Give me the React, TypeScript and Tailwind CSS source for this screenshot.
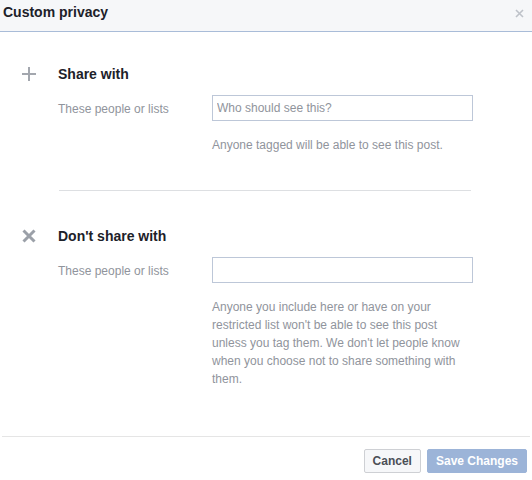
import { useState } from 'react'

function PlusIcon() {
  return (
    <svg width="14" height="14" viewBox="0 0 14 14" className="block">
      <path d="M7 0v14M0 7h14" stroke="#a3a7ae" strokeWidth="2" />
    </svg>
  )
}

function CrossIcon() {
  return (
    <svg width="14" height="14" viewBox="0 0 14 14" className="block">
      <path d="M1.5 1.5l11 11M12.5 1.5l-11 11" stroke="#9ba0a8" strokeWidth="3" />
    </svg>
  )
}

interface SectionProps {
  icon: React.ReactNode
  title: string
  placeholder?: string
  help: string
}

function Section({ icon, title, placeholder, help }: SectionProps) {
  const [value, setValue] = useState('')
  return (
    <div className="flex pl-[22px]">
      <div className="w-[36px] pt-[3px]">{icon}</div>
      <div className="flex-1">
        <div className="text-[14px] leading-[20px] font-bold text-[#1d2129]">{title}</div>
        <div className="mt-[11px] flex items-center">
          <div className="w-[154px] pt-[2px] text-[12px] text-[#90949c]">These people or lists</div>
          <input
            value={value}
            onChange={(e) => setValue(e.target.value)}
            placeholder={placeholder}
            className="w-[261px] h-[26px] border border-[#bdc7d8] px-[4px] text-[12px] text-[#1d2129] placeholder:text-[#90949c] outline-none"
          />
        </div>
        <p className="ml-[154px] w-[262px] mt-[15px] text-[12px] leading-[18px] text-[#90949c]">{help}</p>
      </div>
    </div>
  )
}

export default function App() {
  return (
    <div className="w-[532px] h-[480px] bg-white font-['Liberation_Sans',Arial,sans-serif]">
      <div className="h-[32px] bg-[#f6f7f9] border-b border-[#a9bcd8] flex items-start justify-between pl-[3px] pr-[8px] pt-[3px]">
        <h1 className="text-[14px] leading-[18px] font-bold text-[#1d2129]">Custom privacy</h1>
        <button className="mt-[6px]" aria-label="Close">
          <svg width="9" height="9" viewBox="0 0 9 9" className="block">
            <path d="M1 1l7 7M8 1l-7 7" stroke="#bec2c9" strokeWidth="1.6" />
          </svg>
        </button>
      </div>

      <div className="pt-[32px]">
        <Section
          icon={<PlusIcon />}
          title="Share with"
          placeholder="Who should see this?"
          help="Anyone tagged will be able to see this post."
        />

        <div className="ml-[59px] w-[412px] mt-[36px] mb-[35px] border-t border-[#dddfe2]" />

        <Section
          icon={<CrossIcon />}
          title="Don't share with"
          help="Anyone you include here or have on your restricted list won't be able to see this post unless you tag them. We don't let people know when you choose not to share something with them."
        />
      </div>

      <div className="mt-[48px] mx-[2px] border-t border-[#e5e5e5] flex justify-end gap-[6px] pt-[12px] pr-[3px]">
        <button className="h-[24px] px-[8px] bg-[#f6f7f9] border border-[#ced0d4] rounded-[2px] text-[12px] font-bold text-[#4b4f56]">
          Cancel
        </button>
        <button className="h-[24px] px-[8px] bg-[#9cb4d8] border border-[#9cb4d8] rounded-[2px] text-[12px] font-bold text-white">
          Save Changes
        </button>
      </div>
    </div>
  )
}
